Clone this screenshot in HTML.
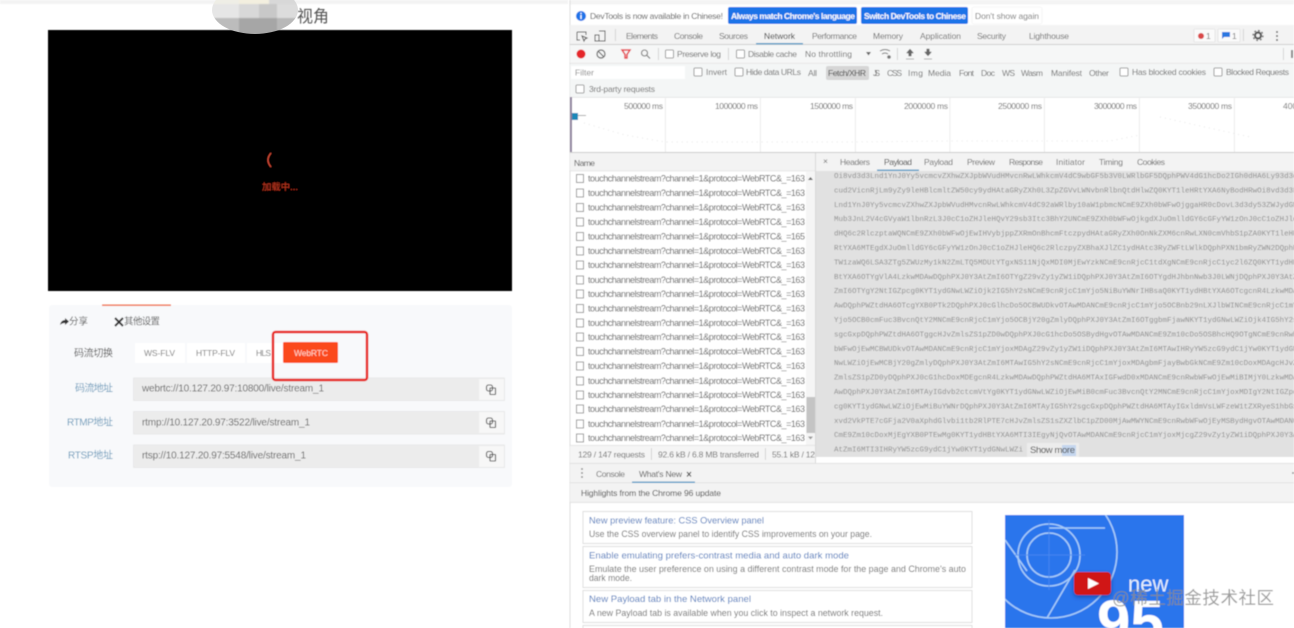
<!DOCTYPE html>
<html><head><meta charset="utf-8"><style>
html,body{margin:0;padding:0;background:#fff;width:1294px;height:628px;overflow:hidden}
svg{display:block}
text{font-family:"Liberation Sans","Noto Sans CJK SC",sans-serif;dominant-baseline:central}
.d text{font-size:8.5px;fill:#6e6e6e}
.m text{font-family:"Liberation Mono",monospace;font-size:7.5px;fill:#8c8c8c}
.r text{font-size:9px;fill:#5c5c5c}
.cb rect{fill:#fff;stroke:#808080;stroke-width:.8}
</style></head><body>
<svg xmlns="http://www.w3.org/2000/svg" width="1294" height="628" viewBox="0 0 1294 628">
<defs><filter id="b" x="-2%" y="-2%" width="104%" height="104%"><feGaussianBlur stdDeviation="0.5"/></filter>
<filter id="b2" x="-10%" y="-10%" width="120%" height="120%"><feGaussianBlur stdDeviation="0.8"/></filter>
<filter id="sh" x="-30%" y="-30%" width="160%" height="160%"><feGaussianBlur stdDeviation="2"/></filter>
<clipPath id="blob"><ellipse cx="255" cy="10" rx="43" ry="24"/></clipPath>
<clipPath id="thumb"><rect x="1005" y="515" width="179" height="113"/></clipPath>
<clipPath id="list"><rect x="571" y="171" width="244" height="274"/></clipPath>
</defs>
<rect width="1294" height="628" fill="#fff"/>
<g filter="url(#b)">
<!-- left -->
<rect x="0" y="0" width="568" height="4" fill="#f3f3f3"/>
<rect x="48" y="30" width="464" height="261" fill="#000"/>
<text x="297" y="17" font-size="16.500" fill="#555" textLength="32" lengthAdjust="spacingAndGlyphs">视角</text>
<path d="M271 153Q265 160 271 167" fill="none" stroke="#e0503a" stroke-width="1.200"/>
<text x="262" y="187" font-size="9" fill="#c83a22" textLength="36" lengthAdjust="spacingAndGlyphs">加载中...</text>
<rect x="49" y="305" width="463" height="182" rx="3" fill="#f8f9fb"/>
<rect x="102" y="304.500" width="69" height="1.500" fill="#f0795a"/>
<path d="M60 325q1-5 5-5v-2l4 3.500-4 3.500v-2q-3 0-5 2z" fill="#333"/>
<text x="69" y="322" font-size="9.500" fill="#555" textLength="19">分享</text>
<path d="M115 318l8 8M123 318l-8 8" stroke="#333" stroke-width="2"/>
<text x="124" y="322" font-size="9.500" fill="#555" textLength="36">其他设置</text>
<text x="74" y="354" font-size="10" fill="#555" textLength="39">码流切换</text>
<rect x="135" y="343" width="50" height="20" fill="#fff"/><rect x="187" y="343" width="58" height="20" fill="#fff"/><rect x="247" y="343" width="36" height="20" fill="#fff"/>
<text x="144" y="353" font-size="8.500" fill="#777" textLength="31">WS-FLV</text>
<text x="196" y="353" font-size="8.500" fill="#777" textLength="39">HTTP-FLV</text>
<text x="256" y="353" font-size="8.500" fill="#777" textLength="15">HLS</text>
<rect x="283" y="342" width="55" height="21" rx="1.500" fill="#fb4a1e"/>
<text x="294" y="353" font-size="8.500" fill="#ffd9cc" textLength="34">WebRTC</text>
<text x="75" y="389" font-size="10" fill="#6c9cbc" textLength="38">码流地址</text>
<text x="67" y="423" font-size="10" fill="#6c9cbc" textLength="46">RTMP地址</text>
<text x="68" y="456" font-size="10" fill="#6c9cbc" textLength="45">RTSP地址</text>
<g fill="#ececec" stroke="#e6e6e6" stroke-width=".8">
<rect x="133.500" y="378" width="371" height="22.500"/><rect x="133.500" y="411.500" width="371" height="22.500"/><rect x="133.500" y="445" width="371" height="22.500"/></g>
<g fill="#f7f7f7"><rect x="479" y="379" width="25" height="21"/><rect x="479" y="412" width="25" height="21"/><rect x="479" y="446" width="25" height="21"/></g>
<rect x="273" y="332" width="94" height="48" rx="2.500" fill="none" stroke="#e8201a" stroke-width="2.500"/>
<g font-size="10" fill="#666">
<text x="142" y="389" textLength="182">webrtc://10.127.20.97:10800/live/stream_1</text>
<text x="142" y="423" textLength="168">rtmp://10.127.20.97:3522/live/stream_1</text>
<text x="142" y="456" textLength="164">rtsp://10.127.20.97:5548/live/stream_1</text></g>
<g fill="none" stroke="#555" stroke-width="1.100">
<rect x="486.500" y="385" width="6" height="6" rx="2"/><rect x="490" y="388" width="5.500" height="6.500" rx=".5"/>
<rect x="486.500" y="418" width="6" height="6" rx="2"/><rect x="490" y="421" width="5.500" height="6.500" rx=".5"/>
<rect x="486.500" y="451.500" width="6" height="6" rx="2"/><rect x="490" y="454.500" width="5.500" height="6.500" rx=".5"/></g>

<!-- devtools base -->
<rect x="570" y="5" width="724" height="623" fill="#fff"/>
<rect x="570" y="0" width="724" height="4.500" fill="#f4f4f4"/>
<rect x="569.500" y="0" width="1" height="628" fill="#ddd"/>
<!-- infobar -->
<circle cx="581" cy="16" r="5" fill="#1a73e8"/><rect x="580.300" y="15" width="1.400" height="4" fill="#fff"/><rect x="580.300" y="12.700" width="1.400" height="1.400" fill="#fff"/>
<g class="d">
<text x="590" y="16" textLength="133" style="fill:#555">DevTools is now available in Chinese!</text>
<rect x="728" y="7" width="129" height="17" rx="2" fill="#1a73e8"/>
<text x="731" y="16" textLength="124" style="fill:#fff;font-weight:bold">Always match Chrome's language</text>
<rect x="861" y="7" width="107" height="17" rx="2" fill="#1a73e8"/>
<text x="864" y="16" textLength="102" style="fill:#fff;font-weight:bold">Switch DevTools to Chinese</text>
<rect x="972" y="7" width="70" height="17" rx="2" fill="#fff" stroke="#eee" stroke-width=".6"/>
<text x="975" y="16" textLength="64" style="fill:#777">Don't show again</text>
</g>
<!-- tabs -->
<rect x="570" y="25" width="724" height="19" fill="#f3f3f3"/>
<rect x="570" y="44" width="724" height="1" fill="#d0d0d0"/>
<rect x="756" y="43" width="47" height="1.500" fill="#5a9fc8"/>
<path d="M577 32h9v3M577 32v8h3M582 36l5 2-2 1-1 2z" fill="none" stroke="#555"/>
<path d="M595 35h4v6h-4zM599 31h6v10h-6" fill="none" stroke="#555"/>
<rect x="615" y="29" width=".8" height="12" fill="#ccc"/>
<g class="d">
<text x="626" y="36" textLength="32">Elements</text><text x="674" y="36" textLength="29">Console</text><text x="719" y="36" textLength="29">Sources</text>
<text x="764" y="36" textLength="31" style="fill:#333">Network</text><text x="812" y="36" textLength="45">Performance</text><text x="873" y="36" textLength="30">Memory</text>
<text x="920" y="36" textLength="41">Application</text><text x="977" y="36" textLength="29">Security</text><text x="1029" y="36" textLength="40">Lighthouse</text>
<rect x="1194" y="29" width="21" height="13" rx="1" fill="#fafafa" stroke="#ddd" stroke-width=".6"/>
<circle cx="1201" cy="36" r="3" fill="#d9484a"/><text x="1206" y="36" style="fill:#777">1</text>
<rect x="1218" y="29" width="22" height="13" rx="1" fill="#fafafa" stroke="#ddd" stroke-width=".6"/>
<path d="M1222 32h8v5h-6l-2 2z" fill="#2a77e0"/><text x="1232" y="36" style="fill:#777">1</text>
</g>
<rect x="1243" y="29" width=".8" height="12" fill="#ccc"/>
<circle cx="1258" cy="35.500" r="3" fill="none" stroke="#555" stroke-width="2.200"/><circle cx="1258" cy="35.500" r="5" fill="none" stroke="#555" stroke-width="1.200" stroke-dasharray="1.800 2.100"/>
<g fill="#666"><circle cx="1277" cy="32" r="1"/><circle cx="1277" cy="36" r="1"/><circle cx="1277" cy="40" r="1"/></g>
<!-- toolbar -->
<rect x="570" y="45" width="724" height="18" fill="#f6f7f7"/>
<rect x="570" y="63" width="724" height=".7" fill="#ddd"/>
<!-- filter row background -->
<rect x="570" y="64" width="724" height="33" fill="#f4f6f6"/>
<rect x="571" y="66" width="114" height="13" fill="#fff"/>
<rect x="826" y="66" width="43" height="14" rx="2" fill="#d6d6d6"/>
<circle cx="581" cy="54" r="4.500" fill="#e5272c"/>
<circle cx="601" cy="54" r="4" fill="none" stroke="#666" stroke-width="1.200"/><path d="M598.500 51.500l5 5" stroke="#666" stroke-width="1.200"/>
<path d="M622 50h8l-3 4.500v3.500h-2v-3.500z" fill="#f4f6f6" stroke="#e5424a" stroke-width="1.500"/>
<circle cx="644.500" cy="53" r="3" fill="none" stroke="#777" stroke-width="1.100"/><path d="M647 55.500l3 3" stroke="#777" stroke-width="1.200"/>
<rect x="658" y="48" width=".8" height="12" fill="#ccc"/>
<rect x="728" y="48" width=".8" height="12" fill="#ccc"/>
<rect x="897" y="48" width=".8" height="12" fill="#ccc"/>
<rect x="1283" y="48" width=".8" height="12" fill="#ccc"/>
<g class="cb"><rect x="665.500" y="50" width="8" height="8" rx="1"/><rect x="736.500" y="50" width="8" height="8" rx="1"/>
<rect x="694" y="68" width="8" height="8" rx="1"/><rect x="735" y="68" width="8" height="8" rx="1"/><rect x="1120" y="68" width="8" height="8" rx="1"/><rect x="1214" y="68" width="8" height="8" rx="1"/><rect x="576" y="85" width="8" height="8" rx="1"/></g>
<g class="d">
<text x="677" y="54" textLength="44">Preserve log</text><text x="748" y="54" textLength="49">Disable cache</text><text x="805" y="54" textLength="47">No throttling</text>
</g>
<path d="M866 52h5l-2.500 3.500z" fill="#666"/>
<path d="M880 51q5-3 10 0M882 54q3-2 6 0" fill="none" stroke="#777" stroke-width="1"/><circle cx="889" cy="57" r="1.800" fill="#777"/>
<path d="M910 49l3.500 4h-2.200v3h-2.600v-3h-2.200zM906 59h8" fill="#666" stroke="#666" stroke-width=".5"/>
<path d="M928 56l3.500-4h-2.200v-3h-2.600v3h-2.200zM924 59h8" fill="#666" stroke="#666" stroke-width=".5"/>
<rect x="1291" y="50" width="2" height="8" fill="#888"/>
<g class="d">
<text x="575" y="72.500" textLength="19" style="fill:#888">Filter</text>
<text x="706" y="72" textLength="21">Invert</text><text x="746" y="72" textLength="55">Hide data URLs</text><text x="808" y="73" textLength="9">All</text>
<text x="828" y="73" textLength="38" style="fill:#444">Fetch/XHR</text><text x="873" y="73" textLength="7">JS</text><text x="887" y="73" textLength="15">CSS</text><text x="908" y="73" textLength="15">Img</text>
<text x="928" y="73" textLength="23">Media</text><text x="959" y="73" textLength="15">Font</text><text x="981" y="73" textLength="14">Doc</text><text x="1002" y="73" textLength="13">WS</text>
<text x="1021" y="73" textLength="22">Wasm</text><text x="1051" y="73" textLength="31">Manifest</text><text x="1089" y="73" textLength="20">Other</text>
<text x="1132" y="72" textLength="74">Has blocked cookies</text><text x="1226" y="72" textLength="63">Blocked Requests</text>
<text x="589" y="89" textLength="66">3rd-party requests</text>
</g>
<rect x="570" y="97" width="724" height=".7" fill="#ddd"/>
<!-- overview -->
<rect x="570" y="97" width="2" height="55" fill="#8d7f9c"/>
<g fill="#e8e8e8"><rect x="665" y="98" width=".8" height="54"/><rect x="760" y="98" width=".8" height="54"/><rect x="855" y="98" width=".8" height="54"/><rect x="949.500" y="98" width=".8" height="54"/><rect x="1044" y="98" width=".8" height="54"/><rect x="1139" y="98" width=".8" height="54"/><rect x="1234" y="98" width=".8" height="54"/></g>
<g class="d">
<text x="624" y="106" textLength="39">500000 ms</text><text x="715" y="106" textLength="43">1000000 ms</text><text x="810" y="106" textLength="43">1500000 ms</text><text x="904" y="106" textLength="44">2000000 ms</text>
<text x="998" y="106" textLength="44">2500000 ms</text><text x="1094" y="106" textLength="43">3000000 ms</text><text x="1188" y="106" textLength="44">3500000 ms</text><text x="1283" y="106">400</text>
</g>
<rect x="572" y="115" width="14" height="1" fill="#aaa"/><rect x="572" y="113" width="6" height="7" fill="#1e88b8"/>
<path d="M584 123L625 135L665 142H855L949 141H1110L1140 135 M1160 117L1250 137" fill="none" stroke="#e6e6e6" stroke-width="1" stroke-dasharray="1 4"/>
<rect x="570" y="152" width="724" height="1" fill="#ccc"/>
<!-- name header -->
<rect x="570" y="153" width="724" height="18" fill="#f3f3f3"/>
<rect x="570" y="170.500" width="245" height=".7" fill="#ddd"/>
<rect x="815" y="153" width="1" height="310" fill="#d8d8d8"/>
<g class="d">
<text x="574" y="163" textLength="21" style="fill:#555">Name</text>
<text x="823" y="161" style="fill:#666">×</text>
<text x="840" y="162" textLength="30">Headers</text><text x="884" y="162" textLength="28" style="fill:#444">Payload</text><text x="924" y="162" textLength="29">Payload</text>
<text x="967" y="162" textLength="28">Preview</text><text x="1009" y="162" textLength="34">Response</text><text x="1056" y="162" textLength="29">Initiator</text><text x="1099" y="162" textLength="24">Timing</text><text x="1137" y="162" textLength="28">Cookies</text>
</g>
<rect x="877" y="169.500" width="42" height="1.500" fill="#5a9fc8"/>
<!-- payload -->
<rect x="816" y="171" width="478" height="286" fill="#e1e1e1"/>
<rect x="816" y="457" width="478" height="6" fill="#fff"/>
<g class="m">
<text x="834" y="177">Oi8vd3d3Lnd1YnJ0Yy5vcmcvZXhwZXJpbWVudHMvcnRwLWhkcmV4dC9wbGF5b3V0LWRlbGF5DQphPWV4dG1hcDo2IGh0dHA6Ly93d3cud2Vi</text>
<text x="834" y="191.400">cud2VicnRjLm9yZy9leHBlcmltZW50cy9ydHAtaGRyZXh0L3ZpZGVvLWNvbnRlbnQtdHlwZQ0KYT1leHRtYXA6NyBodHRwOi8vd3d3Lnd1</text>
<text x="834" y="205.800">Lnd1YnJ0Yy5vcmcvZXhwZXJpbWVudHMvcnRwLWhkcmV4dC92aWRlby10aW1pbmcNCmE9ZXh0bWFwOjggaHR0cDovL3d3dy53ZWJydGMub3Jn</text>
<text x="834" y="220.200">Mub3JnL2V4cGVyaW1lbnRzL3J0cC1oZHJleHQvY29sb3Itc3BhY2UNCmE9ZXh0bWFwOjkgdXJuOmlldGY6cGFyYW1zOnJ0cC1oZHJleHQ6</text>
<text x="834" y="234.600">dHQ6c2RlczptaWQNCmE9ZXh0bWFwOjEwIHVybjppZXRmOnBhcmFtczpydHAtaGRyZXh0OnNkZXM6cnRwLXN0cmVhbS1pZA0KYT1leHRtYXA6</text>
<text x="834" y="249">RtYXA6MTEgdXJuOmlldGY6cGFyYW1zOnJ0cC1oZHJleHQ6c2RlczpyZXBhaXJlZC1ydHAtc3RyZWFtLWlkDQphPXN1bmRyZWN2DQphPW1z</text>
<text x="834" y="263.400">TW1zaWQ6LSA3ZTg5ZWUzMy1kN2ZmLTQ5MDUtYTgxNS11NjQxMDI0MjEwYzkNCmE9cnRjcC1tdXgNCmE9cnRjcC1yc2l6ZQ0KYT1ydHBtYXA6</text>
<text x="834" y="277.800">BtYXA6OTYgVlA4LzkwMDAwDQphPXJ0Y3AtZmI6OTYgZ29vZy1yZW1iDQphPXJ0Y3AtZmI6OTYgdHJhbnNwb3J0LWNjDQphPXJ0Y3AtZmI6</text>
<text x="834" y="292.200">ZmI6OTYgY2NtIGZpcg0KYT1ydGNwLWZiOjk2IG5hY2sNCmE9cnRjcC1mYjo5NiBuYWNrIHBsaQ0KYT1ydHBtYXA6OTcgcnR4LzkwMDAwDQphPW</text>
<text x="834" y="306.600">AwDQphPWZtdHA6OTcgYXB0PTk2DQphPXJ0cGlhcDo5OCBWUDkvOTAwMDANCmE9cnRjcC1mYjo5OCBnb29nLXJlbWINCmE9cnRjcC1mYjo5OCB0</text>
<text x="834" y="321">Yjo5OCB0cmFuc3BvcnQtY2MNCmE9cnRjcC1mYjo5OCBjY20gZmlyDQphPXJ0Y3AtZmI6OTggbmFjawNKYT1ydGNwLWZiOjk4IG5hY2sgcGxp</text>
<text x="834" y="335.400">sgcGxpDQphPWZtdHA6OTggcHJvZmlsZS1pZD0wDQphPXJ0cG1hcDo5OSBydHgvOTAwMDANCmE9Zm10cDo5OSBhcHQ9OTgNCmE9cnRwbWFwOjEw</text>
<text x="834" y="349.800">bWFwOjEwMCBWUDkvOTAwMDANCmE9cnRjcC1mYjoxMDAgZ29vZy1yZW1iDQphPXJ0Y3AtZmI6MTAwIHRyYW5zcG9ydC1jYw0KYT1ydGNwLWZi</text>
<text x="834" y="364.200">NwLWZiOjEwMCBjY20gZmlyDQphPXJ0Y3AtZmI6MTAwIG5hY2sNCmE9cnRjcC1mYjoxMDAgbmFjayBwbGkNCmE9Zm10cDoxMDAgcHJvZmlsZS</text>
<text x="834" y="378.600">ZmlsZS1pZD0yDQphPXJ0cG1hcDoxMDEgcnR4LzkwMDAwDQphPWZtdHA6MTAxIGFwdD0xMDANCmE9cnRwbWFwOjEwMiBIMjY0LzkwMDAwDQph</text>
<text x="834" y="393">AwDQphPXJ0Y3AtZmI6MTAyIGdvb2ctcmVtYg0KYT1ydGNwLWZiOjEwMiB0cmFuc3BvcnQtY2MNCmE9cnRjcC1mYjoxMDIgY2NtIGZpcg0K</text>
<text x="834" y="407.400">cg0KYT1ydGNwLWZiOjEwMiBuYWNrDQphPXJ0Y3AtZmI6MTAyIG5hY2sgcGxpDQphPWZtdHA6MTAyIGxldmVsLWFzeW1tZXRyeS1hbGxv</text>
<text x="834" y="421.800">xvd2VkPTE7cGFja2V0aXphdGlvbi1tb2RlPTE7cHJvZmlsZS1sZXZlbC1pZD00MjAwMWYNCmE9cnRwbWFwOjEyMSBydHgvOTAwMDANCmE9</text>
<text x="834" y="436.200">CmE9Zm10cDoxMjEgYXB0PTEwMg0KYT1ydHBtYXA6MTI3IEgyNjQvOTAwMDANCmE9cnRjcC1mYjoxMjcgZ29vZy1yZW1iDQphPXJ0Y3AtZmI6</text>
<text x="834" y="450.600">AtZmI6MTI3IHRyYW5zcG9ydC1jYw0KYT1ydGNwLWZi</text>
</g>
<rect x="1027" y="443" width="52" height="14" fill="#ececec"/>
<rect x="1062" y="445" width="14" height="11" fill="#c4d6ee"/>
<text x="1030" y="450.500" font-size="9.500" fill="#444" textLength="45">Show more</text>
<!-- list -->
<g class="cb"><rect x="576.500" y="174.500" width="7" height="8"/><rect x="576.500" y="189" width="7" height="8"/><rect x="576.500" y="203.500" width="7" height="8"/><rect x="576.500" y="218" width="7" height="8"/><rect x="576.500" y="232.500" width="7" height="8"/><rect x="576.500" y="247" width="7" height="8"/><rect x="576.500" y="261" width="7" height="8"/><rect x="576.500" y="276" width="7" height="8"/><rect x="576.500" y="290" width="7" height="8"/><rect x="576.500" y="304.500" width="7" height="8"/><rect x="576.500" y="319" width="7" height="8"/><rect x="576.500" y="333" width="7" height="8"/><rect x="576.500" y="347.500" width="7" height="8"/><rect x="576.500" y="362" width="7" height="8"/><rect x="576.500" y="377" width="7" height="8"/><rect x="576.500" y="391" width="7" height="8"/><rect x="576.500" y="405" width="7" height="8"/><rect x="576.500" y="420" width="7" height="8"/><rect x="576.500" y="434" width="7" height="8"/></g>
<g class="r" clip-path="url(#list)">
<text x="588" y="178.500" textLength="217">touchchannelstream?channel=1&amp;protocol=WebRTC&amp;_=163</text>
<text x="588" y="193" textLength="217">touchchannelstream?channel=1&amp;protocol=WebRTC&amp;_=163</text>
<text x="588" y="207.500" textLength="217">touchchannelstream?channel=1&amp;protocol=WebRTC&amp;_=163</text>
<text x="588" y="222" textLength="217">touchchannelstream?channel=1&amp;protocol=WebRTC&amp;_=163</text>
<text x="588" y="236.500" textLength="217">touchchannelstream?channel=1&amp;protocol=WebRTC&amp;_=165</text>
<text x="588" y="251" textLength="217">touchchannelstream?channel=1&amp;protocol=WebRTC&amp;_=163</text>
<text x="588" y="265" textLength="217">touchchannelstream?channel=1&amp;protocol=WebRTC&amp;_=163</text>
<text x="588" y="280" textLength="217">touchchannelstream?channel=1&amp;protocol=WebRTC&amp;_=163</text>
<text x="588" y="294" textLength="217">touchchannelstream?channel=1&amp;protocol=WebRTC&amp;_=163</text>
<text x="588" y="308.500" textLength="217">touchchannelstream?channel=1&amp;protocol=WebRTC&amp;_=163</text>
<text x="588" y="323" textLength="217">touchchannelstream?channel=1&amp;protocol=WebRTC&amp;_=163</text>
<text x="588" y="337" textLength="217">touchchannelstream?channel=1&amp;protocol=WebRTC&amp;_=163</text>
<text x="588" y="351.500" textLength="217">touchchannelstream?channel=1&amp;protocol=WebRTC&amp;_=163</text>
<text x="588" y="366" textLength="217">touchchannelstream?channel=1&amp;protocol=WebRTC&amp;_=163</text>
<text x="588" y="381" textLength="217">touchchannelstream?channel=1&amp;protocol=WebRTC&amp;_=163</text>
<text x="588" y="395" textLength="217">touchchannelstream?channel=1&amp;protocol=WebRTC&amp;_=163</text>
<text x="588" y="409" textLength="217">touchchannelstream?channel=1&amp;protocol=WebRTC&amp;_=163</text>
<text x="588" y="424" textLength="217">touchchannelstream?channel=1&amp;protocol=WebRTC&amp;_=163</text>
<text x="588" y="438" textLength="217">touchchannelstream?channel=1&amp;protocol=WebRTC&amp;_=163</text>
</g>
<rect x="806" y="171" width="9" height="274" fill="#f5f5f5"/>
<rect x="806.500" y="397" width="8.500" height="36" fill="#c4c4c4"/>
<path d="M808 180l2.500-3 2.500 3z" fill="#666"/><path d="M808 436.500l2.500 3 2.500-3z" fill="#999"/>
<!-- status -->
<rect x="570" y="445" width="245" height="18" fill="#f5f5f5"/>
<rect x="570" y="445" width="245" height=".7" fill="#ddd"/>
<g class="d">
<text x="578" y="454.500" textLength="67">129 / 147 requests</text>
<text x="658" y="454.500" textLength="101">92.6 kB / 6.8 MB transferred</text>
<text x="772" y="454.500" textLength="43">55.1 kB / 12</text></g>
<rect x="651" y="448" width=".8" height="12" fill="#ccc"/><rect x="765" y="448" width=".8" height="12" fill="#ccc"/>
<!-- drawer -->
<rect x="570" y="463" width="724" height="20" fill="#f3f3f3"/>
<rect x="570" y="463" width="724" height=".8" fill="#ddd"/>
<rect x="570" y="482.500" width="724" height=".8" fill="#d4d4d4"/>
<g fill="#777"><circle cx="582" cy="469" r=".9"/><circle cx="582" cy="473" r=".9"/><circle cx="582" cy="477" r=".9"/><circle cx="1293" cy="473" r=".9"/></g>
<g class="d"><text x="596" y="474" textLength="29">Console</text><text x="639" y="474" textLength="43" style="fill:#555">What's New</text></g>
<path d="M687 472l4 4.500M691 472l-4 4.500" stroke="#444" stroke-width="1"/>
<rect x="632" y="481.500" width="63" height="1.500" fill="#5a9fc8"/>
<rect x="570" y="483" width="724" height="19" fill="#f3f3f3"/>
<rect x="570" y="502" width="724" height=".8" fill="#ddd"/>
<text x="581" y="493" font-size="8.500" fill="#444" textLength="140">Highlights from the Chrome 96 update</text>
<!-- cards -->
<g fill="#fff" stroke="#dedede" stroke-width="1">
<rect x="583" y="511.500" width="389" height="32"/><rect x="583" y="546.500" width="389" height="41"/><rect x="583" y="590.500" width="389" height="32"/><rect x="583" y="625.500" width="389" height="10"/></g>
<g font-size="9.500" fill="#4a78bc">
<text x="589" y="521" textLength="175" lengthAdjust="spacingAndGlyphs">New preview feature: CSS Overview panel</text>
<text x="589" y="556" textLength="260" lengthAdjust="spacingAndGlyphs">Enable emulating prefers-contrast media and auto dark mode</text>
<text x="589" y="599.500" textLength="162" lengthAdjust="spacingAndGlyphs">New Payload tab in the Network panel</text></g>
<g font-size="9" fill="#6c6c6c">
<text x="589" y="534" textLength="283" lengthAdjust="spacingAndGlyphs">Use the CSS overview panel to identify CSS improvements on your page.</text>
<text x="589" y="569" textLength="377" lengthAdjust="spacingAndGlyphs">Emulate the user preference on using a different contrast mode for the page and Chrome's auto</text>
<text x="589" y="578" textLength="43" lengthAdjust="spacingAndGlyphs">dark mode.</text>
<text x="589" y="613" textLength="294" lengthAdjust="spacingAndGlyphs">A new Payload tab is available when you click to inspect a network request.</text></g>
<!-- thumbnail -->
<rect x="1005" y="515" width="179" height="113" fill="#2b74ec"/>
<g clip-path="url(#thumb)" fill="none" stroke="#a6cbf8" stroke-width="1.600">
<circle cx="1049" cy="555" r="22"/><circle cx="1049" cy="555" r="31"/><circle cx="1051" cy="552" r="66"/>
<path d="M1049 528H1105M1005 540L1027 571M1047 618L1075 570"/>
<path d="M1049 520V590M1015 555H1085" stroke="#4f8cf0" stroke-width=".7"/>
</g>
<rect x="1074" y="574" width="37" height="23" rx="4" fill="#0a2a6a" opacity=".5" filter="url(#sh)"/>
<rect x="1074" y="572" width="37" height="23" rx="4" fill="#d01818"/>
<path d="M1088 578l11 5.500-11 5.500z" fill="#fff"/>
<text x="1128" y="584" font-size="22" fill="#e4eefc">new</text>
<g clip-path="url(#thumb)"><text x="1097" y="622" font-size="60" font-weight="bold" fill="#fff">95</text></g>
<!-- watermark -->
<text x="1112" y="598" font-size="17.500" fill="#8c8c8c" fill-opacity=".85" textLength="162">@稀土掘金技术社区</text>
</g>
<!-- mosaic blob -->
<g clip-path="url(#blob)"><g filter="url(#b2)">
<rect x="210" y="-2" width="90" height="38" fill="#d8d8d8"/>
<rect x="210" y="-2" width="29" height="6" fill="#efeee6"/><rect x="239" y="-2" width="30" height="6" fill="#f3efdf"/>
<rect x="210" y="4" width="29" height="14" fill="#e6e6e6"/><rect x="239" y="4" width="20" height="14" fill="#d8d8d8"/><rect x="259" y="4" width="18" height="14" fill="#c8c8c8"/><rect x="277" y="4" width="23" height="14" fill="#dcdcdc"/>
<rect x="210" y="18" width="29" height="18" fill="#bcbcbc"/><rect x="239" y="18" width="38" height="18" fill="#a6a6a6"/><rect x="277" y="18" width="23" height="18" fill="#b8b8b8"/>
</g></g>
</svg>
</body></html>
